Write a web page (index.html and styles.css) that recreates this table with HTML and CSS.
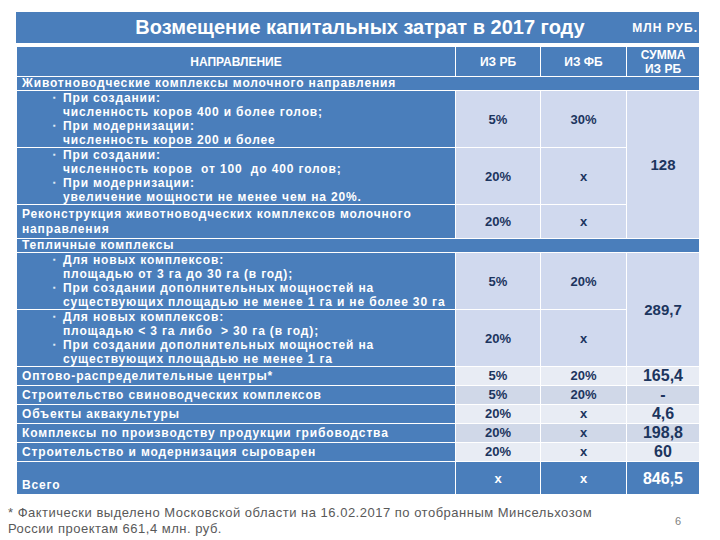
FILE: index.html
```html
<!DOCTYPE html>
<html lang="ru">
<head>
<meta charset="utf-8">
<title>Возмещение капитальных затрат</title>
<link rel="stylesheet" href="styles.css">
</head>
<body>
<div class="page">
  <div class="titlebar">
    <h1 class="title">Возмещение капитальных затрат в 2017 году</h1>
    <span class="unit">МЛН РУБ.</span>
  </div>
  <table class="grid">
    <colgroup>
      <col class="c-dir"><col class="c-rb"><col class="c-fb"><col class="c-sum">
    </colgroup>
    <thead>
      <tr class="r-head">
        <th>НАПРАВЛЕНИЕ</th>
        <th>ИЗ РБ</th>
        <th>ИЗ ФБ</th>
        <th>СУММА<br>ИЗ РБ</th>
      </tr>
    </thead>
    <tbody>
      <tr class="r-sec r-a">
        <td class="dir" colspan="4">Животноводческие комплексы молочного направления</td>
      </tr>
      <tr class="r-b">
        <td class="dir">
          <ul class="bul">
            <li>При создании:<br>численность коров 400 и более голов;</li>
            <li>При модернизации:<br>численность коров 200 и более</li>
          </ul>
        </td>
        <td class="num">5%</td>
        <td class="num">30%</td>
        <td class="num sum" rowspan="3">128</td>
      </tr>
      <tr class="r-c">
        <td class="dir">
          <ul class="bul">
            <li>При создании:<br>численность коров &nbsp;от 100 &nbsp;до 400 голов;</li>
            <li>При модернизации:<br>увеличение мощности не менее чем на 20%.</li>
          </ul>
        </td>
        <td class="num">20%</td>
        <td class="num">x</td>
      </tr>
      <tr class="r-d">
        <td class="dir two">Реконструкция животноводческих комплексов молочного направления</td>
        <td class="num">20%</td>
        <td class="num">x</td>
      </tr>
      <tr class="r-sec r-e">
        <td class="dir" colspan="4">Тепличные комплексы</td>
      </tr>
      <tr class="r-f">
        <td class="dir">
          <ul class="bul">
            <li>Для новых комплексов:<br>площадью от 3 га до 30 га (в год);</li>
            <li>При создании дополнительных мощностей на<br>существующих площадью не менее 1 га и не более 30 га</li>
          </ul>
        </td>
        <td class="num">5%</td>
        <td class="num">20%</td>
        <td class="num sum" rowspan="2">289,7</td>
      </tr>
      <tr class="r-g">
        <td class="dir">
          <ul class="bul">
            <li>Для новых комплексов:<br>площадью &lt; 3 га либо &nbsp;&gt; 30 га (в год);</li>
            <li>При создании дополнительных мощностей на<br>существующих площадью не менее 1 га</li>
          </ul>
        </td>
        <td class="num">20%</td>
        <td class="num">x</td>
      </tr>
      <tr class="r-s lite">
        <td class="dir">Оптово-распределительные центры*</td>
        <td class="num">5%</td>
        <td class="num">20%</td>
        <td class="num big">165,4</td>
      </tr>
      <tr class="r-s dark">
        <td class="dir">Строительство свиноводческих комплексов</td>
        <td class="num">5%</td>
        <td class="num">20%</td>
        <td class="num big">-</td>
      </tr>
      <tr class="r-s lite">
        <td class="dir">Объекты аквакультуры</td>
        <td class="num">20%</td>
        <td class="num">x</td>
        <td class="num big">4,6</td>
      </tr>
      <tr class="r-s dark">
        <td class="dir">Комплексы по производству продукции грибоводства</td>
        <td class="num">20%</td>
        <td class="num">x</td>
        <td class="num big">198,8</td>
      </tr>
      <tr class="r-s lite">
        <td class="dir">Строительство и модернизация сыроварен</td>
        <td class="num">20%</td>
        <td class="num">x</td>
        <td class="num big">60</td>
      </tr>
      <tr class="r-total">
        <td class="dir total-label">Всего</td>
        <td class="num">x</td>
        <td class="num">x</td>
        <td class="num big">846,5</td>
      </tr>
    </tbody>
  </table>
  <div class="foot">
    <p class="note">* Фактически выделено Московской области на 16.02.2017 по отобранным Минсельхозом<br>России проектам 661,4 млн. руб.</p>
    <span class="pageno">6</span>
  </div>
</div>
</body>
</html>
```
FILE: styles.css
```css
html, body {
  margin: 0;
  padding: 0;
  background: #ffffff;
}
body {
  font-family: "Liberation Sans", Arial, sans-serif;
}
.page {
  width: 720px;
  height: 540px;
  padding: 12px 0 0 16px;
  box-sizing: border-box;
}
.titlebar {
  width: 683px;
  height: 31px;
  background: #4a7ebb;
  display: flex;
  align-items: center;
  color: #ffffff;
  box-sizing: border-box;
}
.title {
  margin: 0;
  flex: 1;
  text-align: center;
  font-family: "Liberation Sans", sans-serif;
  font-weight: bold;
  font-size: 20px;
  padding-left: 82px;
}
.unit {
  font-family: "Liberation Sans", sans-serif;
  font-weight: bold;
  font-size: 12px;
  letter-spacing: 1px;
  padding-right: 1px;
  width: 76px;
  text-align: right;
}
.grid {
  width: 683px;
  margin-top: 3px;
  border-collapse: collapse;
  table-layout: fixed;
}
.c-dir { width: 439px; }
.c-rb { width: 85px; }
.c-fb { width: 86px; }
.c-sum { width: 73px; }
.grid th, .grid td {
  border: 1px solid #ffffff;
  padding: 0;
}
.grid th {
  background: #4a7ebb;
  color: #ffffff;
  font-family: "Liberation Sans", sans-serif;
  font-weight: bold;
  font-size: 12px;
  line-height: 14px;
  height: 29px;
}
.dir {
  background: #4a7ebb;
  color: #ffffff;
  font-weight: bold;
  font-size: 12px;
  line-height: 14px;
  letter-spacing: 0.85px;
  padding: 0 0 0 5px !important;
  text-align: left;
  vertical-align: middle;
}
.bul {
  list-style: none;
  margin: 0;
  padding: 0 0 0 41px;
}
.bul li {
  position: relative;
}
.bul li::before {
  content: "▪";
  position: absolute;
  left: -10px;
  top: 0;
  font-size: 8px;
  color: #dfe6f2;
}
.two { line-height: 15px; }
.num {
  background: #d0d9ee;
  color: #1c355e;
  font-weight: bold;
  font-size: 13px;
  text-align: center;
  vertical-align: middle;
}
.sum { font-size: 15px; }
.big { font-size: 16px; line-height: 17px; }
.r-sec td { height: 13px; line-height: 13px; }
.r-b td { height: 56px; }
.r-c td { height: 54px; }
.r-d td { height: 33px; }
.r-f td { height: 55px; }
.r-g td { height: 56px; }
.r-s td { height: 18px; line-height: 18px; }
.lite .num { background: #e8ecf4; }
.dark .num { background: #d0d8e8; }
.r-total td { height: 31px; background: #4a7ebb; color: #ffffff; }
.total-label { vertical-align: bottom !important; line-height: 16px; padding-bottom: 1px !important; }
.foot {
  display: flex;
  align-items: flex-start;
  margin-left: -8px;
  width: 690px;
  margin-top: 10px;
}
.note {
  margin: 0;
  flex: 1;
  color: #595959;
  font-size: 13px;
  line-height: 16px;
  letter-spacing: 0.5px;
}
.pageno {
  color: #7f7f7f;
  font-size: 11px;
  margin-top: 10px;
  margin-right: 17px;
}
```
